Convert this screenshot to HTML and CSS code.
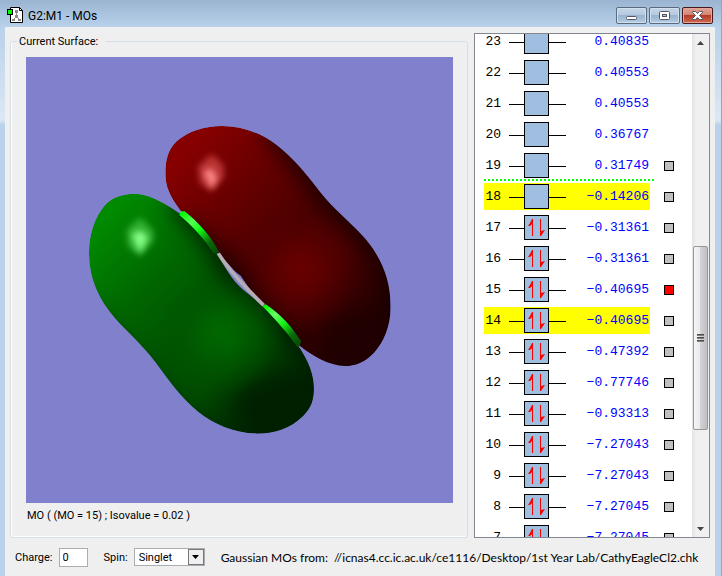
FILE: index.html
```html
<!DOCTYPE html>
<html lang="en">
<head>
    <meta charset="UTF-8">
    <title>G2:M1 - MOs</title>
    <link rel="stylesheet" href="styles.css">
</head>
<body>
<svg class="defs" aria-hidden="true">
    <symbol id="empty" viewBox="0 0 57 25">
        <path d="M0 13.5H57" stroke="#000"/>
        <rect x="15.5" y=".5" width="24" height="24" fill="#a0bfe0" stroke="#000"/>
    </symbol>
    <symbol id="filled" viewBox="0 0 57 25">
        <path d="M0 13.5H57" stroke="#000"/>
        <rect x="15.5" y=".5" width="24" height="24" fill="#a0bfe0" stroke="#000"/>
        <path d="M23 4h1v17h-1V9l-2 2h-2l2-3zM31 4h1v12l4-1-2 3-2 3h-1z" fill="#f00"/>
    </symbol>
</svg>
<div class="window">
    <div class="titlebar">
        <svg class="app-icon" width="17" height="17" viewBox="0 0 17 17">
            <path d="M3.500.5h9l3 3v12h-12z" fill="#fff" stroke="#000"/>
            <path d="M12.500.5v3h3" fill="none" stroke="#000"/>
            <path d="M9.500 5v5M9 10l-3 3M10 10l3 3" stroke="#888" fill="none"/>
            <path d="M8 3h3v3h-3zM8 8h3v3h-3zM5 12h3v2h-3zM11 12h3v2h-3z" fill="#888"/>
            <rect x=".5" y="2.500" width="5" height="5" fill="#0f0" stroke="#000"/>
        </svg>
        <h1>G2:M1 - MOs</h1>
        <div class="buttons">
            <button type="button" aria-label="Minimize">
                <svg width="13" height="12" viewBox="0 0 13 12"><rect x="1.500" y="6.500" width="10" height="3" rx="1" fill="#fff" stroke="#535666"/></svg>
            </button>
            <button type="button" aria-label="Maximize">
                <svg width="13" height="12" viewBox="0 0 13 12"><rect x="1.500" y="1.500" width="10" height="8" rx="1" fill="#fff" stroke="#535666"/><rect x="4.500" y="4.500" width="4" height="2" fill="#a9c1dc" stroke="#535666"/></svg>
            </button>
            <button type="button" class="close" aria-label="Close">
                <svg width="13" height="12" viewBox="0 0 13 12"><path d="M1.500 1.500h3l2 2 2-2h3v1l-3 3 3 3v1h-3l-2-2-2 2h-3v-1l3-3-3-3z" fill="#fff" stroke="#535666"/></svg>
            </button>
        </div>
    </div>
    <div class="client">
        <div class="main">
            <fieldset class="surface">
                <legend>Current Surface:</legend>
                <div class="view">
                    <svg viewBox="0 0 427 446">
                        <defs>
                            <linearGradient id="red" gradientUnits="userSpaceOnUse" x1="310" y1="160" x2="860" y2="700">
                                <stop offset="0" stop-color="#860000"/>
                                <stop offset=".3" stop-color="#620000"/>
                                <stop offset=".52" stop-color="#4a0000"/>
                                <stop offset=".72" stop-color="#480000"/>
                                <stop offset="1" stop-color="#200000"/>
                            </linearGradient>
                            <linearGradient id="green" gradientUnits="userSpaceOnUse" x1="80" y1="350" x2="640" y2="900">
                                <stop offset="0" stop-color="#008a00"/>
                                <stop offset=".3" stop-color="#006600"/>
                                <stop offset=".52" stop-color="#005400"/>
                                <stop offset=".72" stop-color="#004c00"/>
                                <stop offset="1" stop-color="#002000"/>
                            </linearGradient>
                            <radialGradient id="redBump">
                                <stop offset="0" stop-color="#680000"/>
                                <stop offset=".3" stop-color="#640000" stop-opacity=".8"/>
                                <stop offset="1" stop-color="#500000" stop-opacity="0"/>
                            </radialGradient>
                            <radialGradient id="greenBump">
                                <stop offset="0" stop-color="#006800"/>
                                <stop offset=".3" stop-color="#006400" stop-opacity=".8"/>
                                <stop offset="1" stop-color="#005000" stop-opacity="0"/>
                            </radialGradient>
                            <linearGradient id="rod1" gradientUnits="userSpaceOnUse" x1="335" y1="308" x2="442" y2="430">
                                <stop offset="0" stop-color="#0f0"/>
                                <stop offset=".25" stop-color="#5f5"/>
                                <stop offset=".45" stop-color="#1f1"/>
                                <stop offset=".75" stop-color="#0a6a0a"/>
                                <stop offset="1" stop-color="#064a06"/>
                            </linearGradient>
                            <linearGradient id="rod2" gradientUnits="userSpaceOnUse" x1="583" y1="588" x2="690" y2="708">
                                <stop offset="0" stop-color="#0f0"/>
                                <stop offset=".25" stop-color="#6f6"/>
                                <stop offset=".5" stop-color="#1e1"/>
                                <stop offset=".75" stop-color="#0a6a0a"/>
                                <stop offset="1" stop-color="#064a06"/>
                            </linearGradient>
                            <path id="redLobe" d="M286 190C286 150 295 118 320 94C355 62 410 48 455 48C515 48 570 67 620 105C670 145 708 190 748 243C790 297 840 335 882 382C932 440 962 505 962 590C962 650 940 697 912 728C884 757 856 768 825 768C775 766 730 740 690 708C640 660 590 600 545 547C515 505 485 472 445 430C405 385 370 345 330 300C300 260 286 230 286 190Z"/>
                            <path id="greenLobe" d="M57 430C57 375 72 325 105 285C130 258 165 251 200 251C250 255 300 290 340 318C385 360 420 395 445 435C463 470 485 510 520 540C580 585 640 650 690 715C715 755 731 790 732 835C731 870 725 892 700 917C660 957 610 971 560 971C490 969 430 942 385 906C330 860 300 815 255 755C210 698 170 665 135 625C85 567 57 505 57 430Z"/>
                            <clipPath id="redClip"><use href="#redLobe"/></clipPath>
                            <clipPath id="greenClip"><use href="#greenLobe"/></clipPath>
                            <filter id="soft" x="-50%" y="-50%" width="200%" height="200%" color-interpolation-filters="sRGB"><feGaussianBlur stdDeviation="34"/></filter>
                            <filter id="glow" x="-50%" y="-50%" width="200%" height="200%" color-interpolation-filters="sRGB"><feGaussianBlur stdDeviation="9"/></filter>
                        </defs>
                        <g transform="translate(44 53) scale(.3333)">
                            <g clip-path="url(#redClip)">
                                <use href="#redLobe" fill="url(#red)"/>
                                <path d="M600 50C680 120 730 210 800 290S1000 460 990 640" fill="none" stroke="#180000" stroke-width="60" filter="url(#soft)"/>
                                <path d="M330 350L460 460L550 570L690 720" fill="none" stroke="#180000" stroke-width="60" filter="url(#soft)"/>
                                <ellipse cx="870" cy="700" rx="120" ry="90" fill="#200000" filter="url(#soft)"/>
                                <circle cx="690" cy="475" r="190" fill="url(#redBump)"/>
                                <path d="M425 132L460 165L463 200L425 244L390 220L384 170Z" fill="#e05050" fill-opacity=".65" filter="url(#glow)"/>
                                <path d="M400 185L425 175L442 205L425 238Z" fill="#ff8888" filter="url(#glow)"/>
                            </g>
                            <g clip-path="url(#greenClip)">
                                <use href="#greenLobe" fill="url(#green)"/>
                                <path d="M320 270L420 370L490 500L610 600L750 760" fill="none" stroke="#001800" stroke-width="60" filter="url(#soft)"/>
                                <path d="M30 590L130 700L240 820L330 930L470 1010" fill="none" stroke="#001c00" stroke-width="40" filter="url(#soft)"/>
                                <ellipse cx="640" cy="890" rx="150" ry="90" fill="#002000" filter="url(#soft)"/>
                                <circle cx="455" cy="670" r="190" fill="url(#greenBump)"/>
                                <path d="M210 322L250 360L250 395L210 438L174 410L170 360Z" fill="#40c040" fill-opacity=".75" filter="url(#glow)"/>
                                <path d="M185 375L210 360L235 382L210 430Z" fill="#88ff88" filter="url(#glow)"/>
                            </g>
                            <path d="M478 472L512 497L545 545L520 532L492 503Z" fill="#8080cc"/>
                            <path d="M445 430C475 480 530 535 581 586" fill="none" stroke="#b4aeb4" stroke-width="11"/>
                            <path d="M328 315L333 304L344 304C385 337 425 380 447 426L440 432L430 428C400 385 370 350 328 315Z" fill="url(#rod1)"/>
                            <path d="M577 588L587 583C635 615 665 650 693 693L690 708L682 710C650 667 620 632 577 588Z" fill="url(#rod2)"/>
                        </g>
                    </svg>
                </div>
                <p class="caption">MO ( (MO = 15) ; Isovalue = 0.02 )</p>
            </fieldset>
            <div class="orbitals">
                <ul class="levels">
                    <li><div class="level"><span class="num">23</span><svg><use href="#empty"/></svg><span class="energy">0.40835</span></div></li>
                    <li><div class="level"><span class="num">22</span><svg><use href="#empty"/></svg><span class="energy">0.40553</span></div></li>
                    <li><div class="level"><span class="num">21</span><svg><use href="#empty"/></svg><span class="energy">0.40553</span></div></li>
                    <li><div class="level"><span class="num">20</span><svg><use href="#empty"/></svg><span class="energy">0.36767</span></div></li>
                    <li class="lumo"><div class="level"><span class="num">19</span><svg><use href="#empty"/></svg><span class="energy">0.31749</span></div><button type="button" class="swatch" aria-label="Show MO 19"></button></li>
                    <li><div class="level selected"><span class="num">18</span><svg><use href="#empty"/></svg><span class="energy">−0.14206</span></div><button type="button" class="swatch" aria-label="Show MO 18"></button></li>
                    <li><div class="level"><span class="num">17</span><svg><use href="#filled"/></svg><span class="energy">−0.31361</span></div><button type="button" class="swatch" aria-label="Show MO 17"></button></li>
                    <li><div class="level"><span class="num">16</span><svg><use href="#filled"/></svg><span class="energy">−0.31361</span></div><button type="button" class="swatch" aria-label="Show MO 16"></button></li>
                    <li><div class="level"><span class="num">15</span><svg><use href="#filled"/></svg><span class="energy">−0.40695</span></div><button type="button" class="swatch current" aria-label="Show MO 15"></button></li>
                    <li><div class="level selected"><span class="num">14</span><svg><use href="#filled"/></svg><span class="energy">−0.40695</span></div><button type="button" class="swatch" aria-label="Show MO 14"></button></li>
                    <li><div class="level"><span class="num">13</span><svg><use href="#filled"/></svg><span class="energy">−0.47392</span></div><button type="button" class="swatch" aria-label="Show MO 13"></button></li>
                    <li><div class="level"><span class="num">12</span><svg><use href="#filled"/></svg><span class="energy">−0.77746</span></div><button type="button" class="swatch" aria-label="Show MO 12"></button></li>
                    <li><div class="level"><span class="num">11</span><svg><use href="#filled"/></svg><span class="energy">−0.93313</span></div><button type="button" class="swatch" aria-label="Show MO 11"></button></li>
                    <li><div class="level"><span class="num">10</span><svg><use href="#filled"/></svg><span class="energy">−7.27043</span></div><button type="button" class="swatch" aria-label="Show MO 10"></button></li>
                    <li><div class="level"><span class="num">9</span><svg><use href="#filled"/></svg><span class="energy">−7.27043</span></div><button type="button" class="swatch" aria-label="Show MO 9"></button></li>
                    <li><div class="level"><span class="num">8</span><svg><use href="#filled"/></svg><span class="energy">−7.27045</span></div><button type="button" class="swatch" aria-label="Show MO 8"></button></li>
                    <li><div class="level"><span class="num">7</span><svg><use href="#filled"/></svg><span class="energy">−7.27045</span></div><button type="button" class="swatch" aria-label="Show MO 7"></button></li>
                </ul>
                <div class="scrollbar">
                    <button type="button" aria-label="Scroll up"><svg width="7" height="4" viewBox="0 0 7 4"><path d="M0 4L3.500 0L7 4z" fill="#444"/></svg></button>
                    <div class="track"><div class="thumb"><i></i><i></i><i></i></div></div>
                    <button type="button" aria-label="Scroll down"><svg width="7" height="4" viewBox="0 0 7 4"><path d="M0 0L3.500 4L7 0z" fill="#444"/></svg></button>
                </div>
            </div>
        </div>
        <form class="status">
            <label for="charge">Charge:</label>
            <input id="charge" type="text" value="0">
            <label for="spin">Spin:</label>
            <span class="combo">
                <select id="spin"><option>Singlet</option></select>
                <span class="arrow"><svg width="7" height="4" viewBox="0 0 7 4"><path d="M0 0h7L3.500 4z" fill="#000"/></svg></span>
            </span>
            <p class="source">Gaussian MOs from:&nbsp; //icnas4.cc.ic.ac.uk/ce1116/Desktop/1st Year Lab/CathyEagleCl2.chk</p>
        </form>
    </div>
</div>
</body>
</html>
```
FILE: styles.css
```css
*{
    box-sizing: border-box;
    margin: 0;
    padding: 0;
}
body{
    height: 100vh;
    overflow: hidden;
    font-family: Roboto, "Liberation Sans", sans-serif;
    font-size: 11px;
    color: #000;
}
ul{
    list-style: none;
}
button{
    font: inherit;
}
.defs{
    position: absolute;
    width: 0;
    height: 0;
}
.window{
    display: flex;
    flex-direction: column;
    height: 100%;
    padding: 0 6px 0 5px;
    border-right: 1px solid #4cc4e8;
    background: linear-gradient(#9ab4d1, #b9d1ea 27px, #dce8f5 120px, #b9d1ea 125px);
}
.titlebar{
    display: flex;
    flex: none;
    align-items: center;
    height: 27px;
    padding: 4px 2px 0;
}
.titlebar h1{
    flex: 1;
    margin-left: 4px;
    font-size: 12px;
    font-weight: normal;
}
.buttons{
    display: flex;
    gap: 2px;
}
.buttons button{
    display: flex;
    align-items: center;
    justify-content: center;
    width: 31px;
    height: 17px;
    border: 1px solid #5a6b80;
    border-radius: 2px;
    background: linear-gradient(#c4d5e8, #b4c8de 50%, #98b3ce 50%, #b4cde4);
    box-shadow: inset 0 0 0 1px #d3e0ee;
}
.buttons .close{
    border-color: #431a1c;
    background: linear-gradient(#e2a397, #d4806f 50%, #b43c26 50%, #cf6a50);
    box-shadow: inset 0 0 0 1px #e4a79c;
}
.client{
    display: flex;
    flex: 1;
    flex-direction: column;
    min-height: 0;
    background: #efefef;
}
.main{
    display: flex;
    flex: 1;
    gap: 6px;
    min-height: 0;
    padding: 6px 5px 0;
}
.surface{
    display: flex;
    flex: 1;
    flex-direction: column;
    min-width: 0;
    padding: 7px 14px 8px 15px;
    border: 1px solid #d5dfe5;
    border-radius: 3px;
    box-shadow: inset 0 -1px #fff, inset 1px 0 #fff;
}
.surface legend{
    margin-left: -9px;
    padding: 1px 8px 0 2px;
    line-height: 16px;
}
.view{
    flex: 1;
    min-height: 0;
    background: #8080cc;
}
.view svg{
    display: block;
    width: 100%;
    height: 100%;
}
.caption{
    padding-left: 1px;
    line-height: 26px;
}
.orbitals{
    display: flex;
    flex: none;
    width: 236px;
    overflow: hidden;
    border: 1px solid #828790;
    background: #fff;
}
/* list is scrolled part way into its first row */
.levels{
    flex: 1;
    margin-top: -8px;
    padding-left: 9px;
    font-family: "Liberation Mono", "Courier New", monospace;
    font-size: 13px;
}
.levels li{
    display: flex;
    align-items: center;
    gap: 14px;
    height: 31px;
}
.levels .lumo{
    background: repeating-linear-gradient(90deg, #0f0 0 2px, transparent 2px 4px) 0 29px / 170px 2px no-repeat;
}
.level{
    display: flex;
    align-items: center;
    width: 166px;
    height: 27px;
}
.level svg{
    width: 57px;
    height: 25px;
    margin-left: 8px;
}
.selected{
    background: #ff0;
}
.num{
    width: 17px;
    text-align: right;
}
.energy{
    flex: 1;
    padding-right: 1px;
    text-align: right;
    color: #00f;
}
.swatch{
    width: 10px;
    height: 10px;
    border: 1px solid #000;
    background: #c0c0c0;
}
.swatch.current{
    background: #f00;
}
.scrollbar{
    display: flex;
    flex: none;
    flex-direction: column;
    width: 17px;
    background: linear-gradient(90deg, #e3e3e3, #f0f0f0 4px, #f0f0f0);
}
.scrollbar button{
    display: flex;
    align-items: center;
    justify-content: center;
    height: 17px;
    border: 0;
    background: none;
}
.track{
    flex: 1;
    padding-top: 195px;
}
.thumb{
    display: flex;
    flex-direction: column;
    align-items: center;
    justify-content: center;
    gap: 1px;
    height: 184px;
    width: 15px;
    margin: 0 auto;
    border: 1px solid #979797;
    border-radius: 2px;
    background: linear-gradient(90deg, #f5f5f5, #e9e9eb 50%, #d2d2d6 50%, #c0c0c4);
}
.thumb i{
    width: 7px;
    height: 2px;
    background: linear-gradient(#333, #999);
}
.status{
    display: flex;
    flex: none;
    align-items: center;
    height: 38px;
    padding: 0 10px;
}
.status label{
    flex: none;
}
#charge{
    width: 29px;
    height: 19px;
    margin: 0 16px 0 6px;
    padding-left: 3px;
    border: 1px solid #abadb3;
    background: #fff;
    font: inherit;
}
.combo{
    display: flex;
    flex: none;
    width: 71px;
    height: 18px;
    margin: 0 16px 0 6px;
    border: 1px solid #abadb3;
    background: #fff;
}
.combo select{
    flex: 1;
    min-width: 0;
    padding-left: 4px;
    border: 0;
    background: none;
    font: inherit;
    appearance: none;
}
.combo .arrow{
    display: flex;
    flex: none;
    align-items: center;
    justify-content: center;
    width: 16px;
    border: 1px solid #777;
    background: #f0f0f0;
}
.source{
    flex: 1;
    font-family: Lato, sans-serif;
    font-size: 12px;
    white-space: nowrap;
}
```
